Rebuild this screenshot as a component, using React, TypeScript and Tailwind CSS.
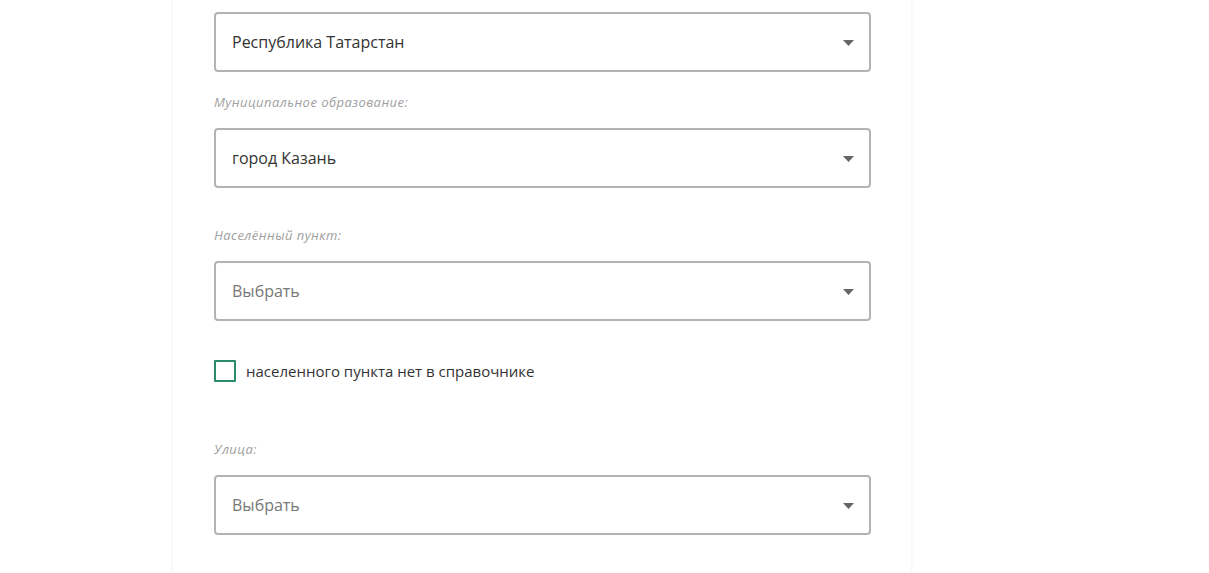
import React from "react";

const font = { fontFamily: '"Open Sans", "Liberation Sans", sans-serif' };

function Select({ value, placeholder }: { value?: string; placeholder?: string }) {
  return (
    <div className="flex h-[60px] w-[657px] items-center justify-between rounded-[4px] border-2 border-[#b3b3b3] bg-white pl-[16px] pr-[15px]">
      <span className={value ? "text-[16px] text-[#333333]" : "text-[16px] text-[#777777]"}>
        {value ?? placeholder}
      </span>
      <svg width="11" height="6" viewBox="0 0 11 6" className="mt-[1px]">
        <path d="M0 0 L11 0 L5.5 6 Z" fill="#666666" />
      </svg>
    </div>
  );
}

function Label({ children, className }: { children: React.ReactNode; className?: string }) {
  return (
    <div className={`text-[13px] italic leading-[18px] tracking-[0.45px] text-[#a0a0a0] mb-[17px] ${className ?? ""}`}>
      {children}
    </div>
  );
}

export default function App() {
  return (
    <div className="min-h-[573px] w-[1209px] overflow-hidden bg-white" style={font}>
      <div className="ml-[173px] h-[573px] w-[738px] bg-white pl-[41px] pt-[12px] shadow-[0_0_3px_rgba(0,0,0,0.09)]">
        <Select value="Республика Татарстан" />
        <Label className="mt-[21px]">Муниципальное образование:</Label>
        <Select value="город Казань" />
        <Label className="mt-[38px]">Населённый пункт:</Label>
        <Select placeholder="Выбрать" />
        <div className="mt-[39px] flex h-[22px] items-center">
          <div className="h-[22px] w-[22px] rounded-[1px] border-2 border-[#2a8a6c]" />
          <span className="ml-[10px] text-[15px] text-[#333333]">населенного пункта нет в справочнике</span>
        </div>
        <Label className="mt-[58px]">Улица:</Label>
        <Select placeholder="Выбрать" />
      </div>
    </div>
  );
}
